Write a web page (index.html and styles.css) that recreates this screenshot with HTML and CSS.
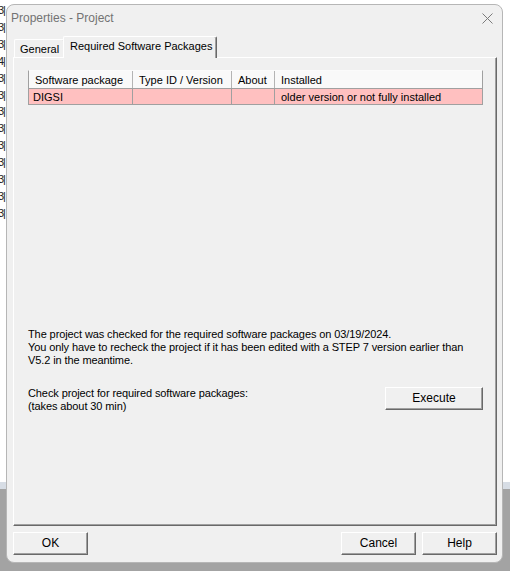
FILE: index.html
```html
<!DOCTYPE html>
<html lang="en">
<head>
    <meta charset="UTF-8">
    <title>Properties - Project</title>
    <link rel="stylesheet" href="styles.css">
</head>
<body>
    <div class="desktop">
        <div class="desk-strip">
            <span>3|</span><span>3|</span><span>3|</span><span>4|</span><span>3|</span><span>3|</span><span>3|</span>
            <span>3|</span><span>3|</span><span>3|</span><span>3|</span><span>3|</span><span>3|</span>
        </div>

        <div class="window">
            <div class="titlebar">
                <span class="title">Properties - Project</span>
                <svg class="close" width="11" height="11" viewBox="0 0 11 11">
                    <path d="M0.5 0.5 L10.5 10.5 M10.5 0.5 L0.5 10.5" stroke="#7b7b7b" stroke-width="1" fill="none"/>
                </svg>
            </div>

            <div class="tabs">
                <div class="tab">General</div>
                <div class="tab active">Required Software Packages</div>
            </div>

            <div class="panel">
                <div class="list">
                    <div class="list-row list-head">
                        <span>Software package</span>
                        <span>Type ID / Version</span>
                        <span>About</span>
                        <span>Installed</span>
                    </div>
                    <div class="list-row list-item">
                        <span>DIGSI</span>
                        <span></span>
                        <span></span>
                        <span>older version or not fully installed</span>
                    </div>
                </div>

                <p class="info">
                    The project was checked for the required software packages on 03/19/2024.<br>
                    You only have to recheck the project if it has been edited with a STEP 7 version earlier than<br>
                    V5.2 in the meantime.
                </p>

                <div class="check-row">
                    <p class="info">
                        Check project for required software packages:<br>
                        (takes about 30 min)
                    </p>
                    <button class="btn execute">Execute</button>
                </div>
            </div>

            <div class="buttons">
                <button class="btn">OK</button>
                <span class="spacer"></span>
                <button class="btn">Cancel</button>
                <button class="btn">Help</button>
            </div>
        </div>
    </div>
</body>
</html>
```

FILE: styles.css
```css
body {
    margin: 0;
    overflow: hidden;
    font-family: "Liberation Sans", Arial, sans-serif;
    font-size: 11px;
    color: #000;
}

.desktop {
    position: relative;
    width: 510px;
    height: 571px;
    overflow: hidden;
    background: linear-gradient(to bottom, #ffffff 0, #ffffff 482px, #d7dde5 482px, #d7dde5 489px, #a3a3a3 489px);
}

.desk-strip {
    display: flex;
    flex-direction: column;
    margin-left: -2px;
    padding-top: 2px;
    font-size: 11px;
    line-height: 16.9px;
    color: #222;
    letter-spacing: -1px;
}

.window {
    position: absolute;
    left: 6px;
    top: 4px;
    width: 497px;
    height: 559px;
    box-sizing: border-box;
    display: flex;
    flex-direction: column;
    padding: 0 5px 0 6px;
    border: 1px solid #b6b6b6;
    border-radius: 8px;
    background-color: #f0f0f0;
}

.titlebar {
    height: 26px;
    display: flex;
    align-items: center;
    justify-content: space-between;
    margin-left: -2px;
}

.title {
    font-size: 12px;
    color: #737373;
}

.close {
    margin-right: 4px;
}

.tabs {
    height: 26px;
    display: flex;
    align-items: flex-end;
}

.tab {
    box-sizing: border-box;
    height: 18px;
    width: 50px;
    margin-left: 1px;
    padding: 3px 0 0 5px;
    border-top: 1px solid #fff;
    border-left: 1px solid #fff;
    border-right: 1px solid #a0a0a0;
    border-radius: 2px 2px 0 0;
    white-space: nowrap;
}

.tab.active {
    position: relative;
    z-index: 1;
    height: 22px;
    width: 154px;
    margin-left: -1px;
    margin-bottom: -1px;
    padding: 3px 0 0 6px;
    border-right: 1px solid #696969;
    box-shadow: inset -1px 0 #a0a0a0;
    background-color: #f0f0f0;
}

.panel {
    flex: none;
    height: 469px;
    box-sizing: border-box;
    padding: 12px 13px 0 14px;
    border-top: 1px solid #fff;
    border-left: 1px solid #fff;
    border-right: 1px solid #696969;
    border-bottom: 1px solid #696969;
    box-shadow: inset -1px -1px #a0a0a0;
}

.list-row {
    display: grid;
    grid-template-columns: 104px 99px 43px 1fr;
}

.list-row span {
    border-right: 1px solid #a0a0a0;
    white-space: nowrap;
    overflow: hidden;
}

.list-row span:last-child {
    border-right: none;
}

.list-head {
    height: 18px;
    box-sizing: border-box;
    line-height: 18px;
    border-left: 1px solid #a0a0a0;
    border-right: 1px solid #a0a0a0;
    border-top: 1px solid #fbfbfb;
    background-color: #f9f9f9;
}

.list-head span {
    padding-left: 6px;
    border-right-color: #b4b4b4;
}

.list-item {
    height: 17px;
    box-sizing: border-box;
    line-height: 16px;
    border: 1px solid #a0a0a0;
    background-color: #ffc0c0;
}

.list-item span {
    padding-left: 4px;
}

.list-item span:last-child {
    padding-left: 6px;
}

.info {
    margin: 223px 0 0;
    line-height: 13px;
    letter-spacing: -0.1px;
    white-space: nowrap;
}

.check-row {
    display: flex;
    justify-content: space-between;
    align-items: flex-start;
    margin-top: 20px;
}

.check-row .info {
    margin: 0;
}

.btn {
    box-sizing: border-box;
    width: 75px;
    height: 23px;
    padding: 0 0 1px;
    font-family: "Liberation Sans", Arial, sans-serif;
    font-size: 12px;
    color: #000;
    background-color: #f0f0f0;
    border-top: 1px solid #fff;
    border-left: 1px solid #fff;
    border-right: 1px solid #696969;
    border-bottom: 1px solid #696969;
    box-shadow: inset -1px -1px #a0a0a0;
    border-radius: 0;
}

.btn.execute {
    width: 98px;
}

.buttons {
    display: flex;
    gap: 6px;
    margin-top: 6px;
}

.spacer {
    flex-grow: 1;
}
```
